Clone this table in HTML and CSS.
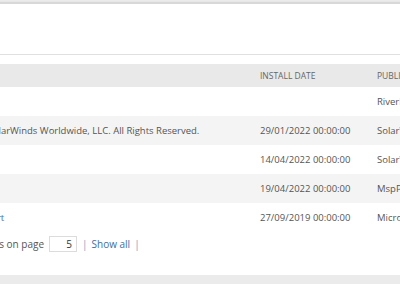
FILE: index.html
```html
<!DOCTYPE html>
<html>
<head>
	<meta charset="utf-8">
	<meta name="viewport" content="width=device-width">
	<title>Installed software</title>
	<link rel="stylesheet" href="styles.css">
</head>
<body>
	<div class="panel">
		<div class="toolbar"></div>
		<table class="grid">
			<colgroup>
				<col class="c-name">
				<col class="c-desc">
				<col class="c-date">
				<col class="c-pub">
			</colgroup>
			<thead>
				<tr>
					<th>Name</th>
					<th>Details</th>
					<th>Install date</th>
					<th>Publisher</th>
				</tr>
			</thead>
			<tbody>
				<tr>
					<td></td>
					<td></td>
					<td></td>
					<td>RiverBed Technology</td>
				</tr>
				<tr>
					<td></td>
					<td>© 2022 SolarWinds Worldwide, LLC. All Rights Reserved.</td>
					<td>29/01/2022 00:00:00</td>
					<td>SolarWinds</td>
				</tr>
				<tr>
					<td></td>
					<td></td>
					<td>14/04/2022 00:00:00</td>
					<td>SolarWinds</td>
				</tr>
				<tr>
					<td></td>
					<td></td>
					<td>19/04/2022 00:00:00</td>
					<td>MspPlatform</td>
				</tr>
				<tr>
					<td></td>
					<td><a href="#">MS support</a></td>
					<td>27/09/2019 00:00:00</td>
					<td>Microsoft Corporation</td>
				</tr>
			</tbody>
		</table>
		<div class="pager">
			<span>Items on page</span>
			<input class="page-size" type="text" value="5">
			<span class="sep">|</span>
			<a href="#">Show all</a>
			<span class="sep">|</span>
		</div>
	</div>
</body>
</html>
```

FILE: styles.css
```css
html, body {
	margin: 0;
	padding: 0;
}

body {
	background-color: #ebebeb;
	font-family: "Open Sans", "Liberation Sans", sans-serif;
	font-size: 9.5px;
	color: #555;
	overflow: hidden;
}

a {
	color: #3d6ea5;
	text-decoration: none;
}

.panel {
	margin: 3px 0 0 -200px;
	width: 700px;
	height: 272px;
	background-color: #fff;
	box-shadow: 0 0 2px rgba(0, 0, 0, 0.25);
	border-top: 1px solid #d8d8d8;
	box-sizing: border-box;
}

.toolbar {
	height: 50px;
	border-bottom: 1px solid #e0e0e0;
	margin-bottom: 9px;
}

.grid {
	border-collapse: collapse;
	table-layout: fixed;
	width: 700px;
}

.c-name { width: 143px; }
.c-desc { width: 307px; }
.c-date { width: 117px; }
.c-pub { width: 133px; }

.grid th,
.grid td {
	padding: 0 10px;
	text-align: left;
	white-space: nowrap;
	overflow: hidden;
}

.grid th {
	height: 23px;
	background-color: #e9e9e9;
	font-weight: normal;
	font-size: 8.5px;
	text-transform: uppercase;
	color: #666;
}

.grid td {
	height: 29px;
}

.grid td:nth-child(2) {
	overflow: visible;
}

.grid tbody tr:nth-child(even) td {
	background-color: #f4f4f4;
}

.pager {
	display: flex;
	align-items: center;
	gap: 4px;
	margin: 4px 0 0 178px;
	font-size: 10px;
}

.page-size {
	width: 28px;
	height: 16px;
	box-sizing: border-box;
	border: 1px solid #dcdcdc;
	padding: 0 4px;
	text-align: right;
	font-family: inherit;
	font-size: 10px;
	color: #333;
	margin: 0 1px;
}

.sep {
	color: #7d9cc2;
}
```
